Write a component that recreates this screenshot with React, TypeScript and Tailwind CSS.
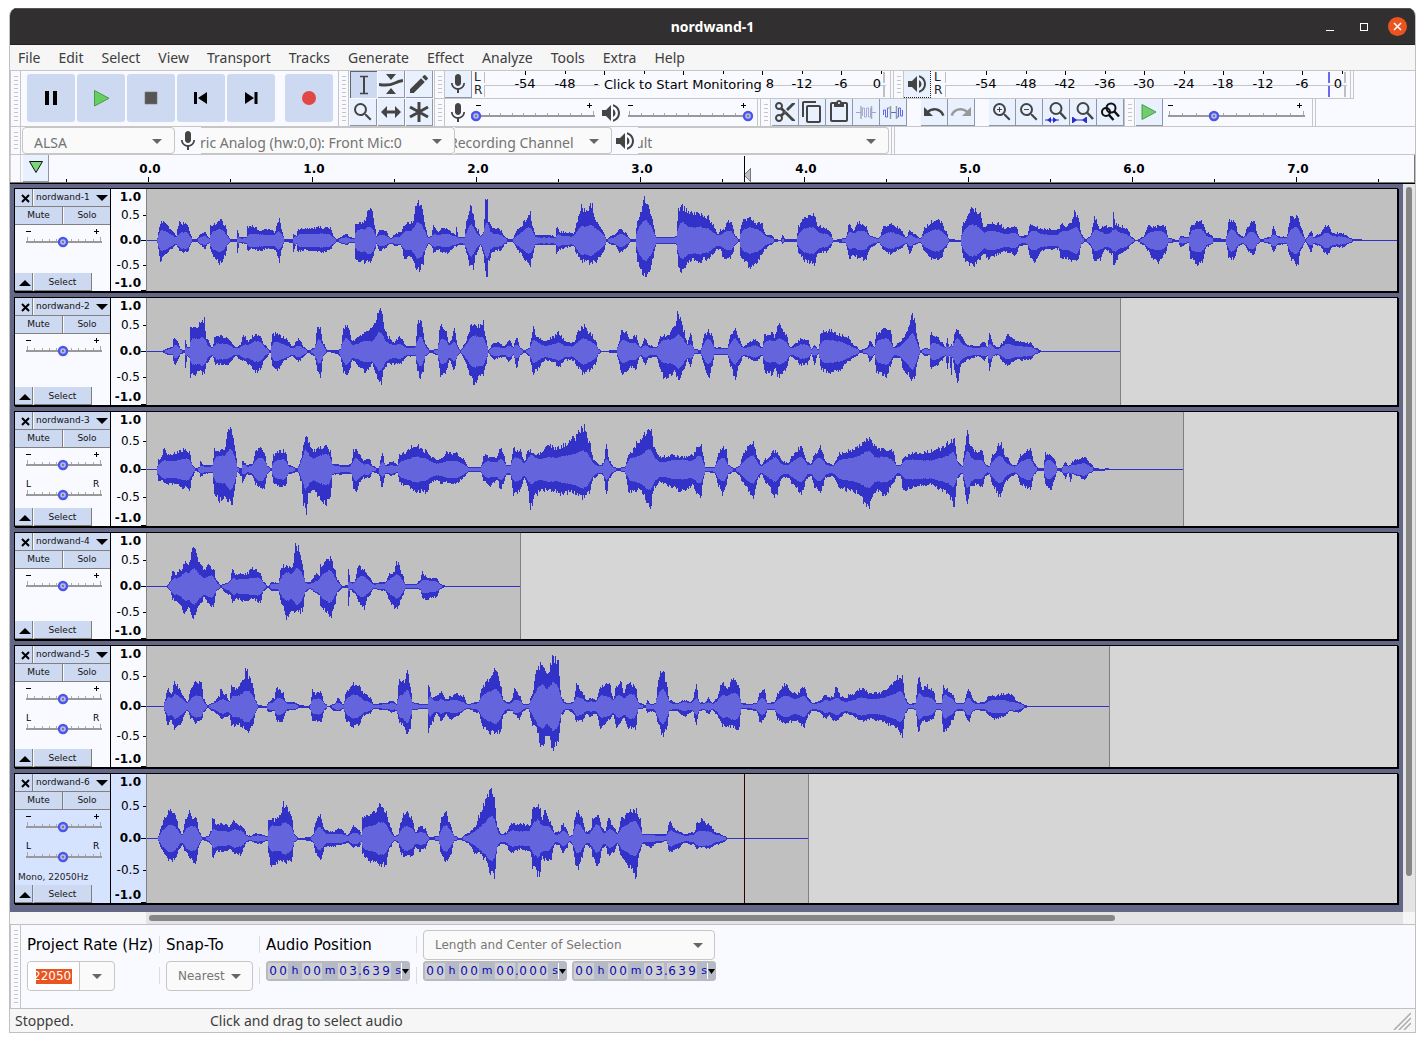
import type { ReactNode } from 'react';
import {
  MdMic,
  MdVolumeUp,
  MdEdit,
  MdSearch,
  MdContentCut,
  MdContentCopy,
  MdContentPaste,
  MdUndo,
  MdRedo,
  MdZoomIn,
  MdZoomOut,
} from 'react-icons/md';

type Track = {
  name: string;
  height: number;
  end: number | null;
  pan: boolean;
  info?: string;
  selected?: boolean;
  cursor?: number;
  wave: string;
};

/* Timeline pixel where the first sample of every clip lies. */
const ORIGIN = 147;

/* Envelope key points: "x:above,below", joined by eased segments. */
const TRACKS: Track[] = [
  {
    name: 'nordwand-1',
    height: 102,
    end: null,
    pan: false,
    wave:
      '156:0,0;157:2,2;159:15,15;160:18,20;165:19,14;170:11,9;176:5,4;178:15,8;179:18,10;187:16,12;190:6,4;192:1,1;196:1,1;200:6,4;205:8,8;207:4,3;209:2,2;210:14,8;213:16,16;220:20,22;225:15,14;227:5,4;230:1,1;236:1,1;237:11,12;239:3,2;246:3,3;247:13,9;253:14,8;260:10,10;267:11,8;275:8,9;276:14,12;279:20,20;281:12,8;284:1,1;292:1,2;293:6,10;296:4,3;297:10,11;305:12,9;313:12,10;325:13,11;330:12,9;333:4,4;336:1,1;346:6,4;350:3,2;354:2,2;355:16,20;365:18,21;368:30,20;371:29,20;375:12,8;376:4,3;379:10,10;385:10,7;390:2,3;395:6,5;400:8,4;405:16,19;410:17,16;413:20,20;415:37,26;419:37,28;423:28,24;425:12,8;428:3,3;431:5,5;433:14,12;438:8,8;442:12,12;447:11,12;452:8,8;455:5,5;456:12,7;458:3,4;464:3,4;466:20,12;470:34,26;473:25,27;475:12,14;478:10,10;480:4,4;483:8,12;485:38,34;487:38,37;488:20,20;492:12,12;496:12,9;500:10,10;505:3,3;508:1,1;512:1,1;517:11,8;520:12,12;525:20,20;530:27,24;532:14,16;535:5,4;550:5,4;555:3,4;556:13,12;560:8,8;568:8,6;573:6,5;576:16,12;581:34,21;585:28,20;591:36,22;596:20,20;600:14,16;603:8,12;606:1,1;612:5,4;615:6,4;619:12,12;625:8,8;630:1,1;635:1,1;637:20,22;640:28,28;644:40,34;648:34,32;652:20,20;656:3,3;674:3,3;676:5,4;678:32,24;681:34,32;690:28,20;696:26,18;698:30,24;703:22,18;707:24,20;712:16,14;718:6,8;720:10,9;723:10,17;728:18,16;731:18,16;735:4,4;739:1,1;740:12,14;742:20,18;750:21,26;756:17,24;761:17,14;765:6,8;770:5,4;775:1,1;780:0,0;782:5,3;785:1,1;796:1,1;798:14,12;805:24,20;814:25,23;818:14,12;826:12,11;830:8,6;833:0,1;845:2,2;849:16,18;853:10,14;858:18,17;865:14,19;870:4,7;878:2,2;884:14,10;891:16,13;899:12,8;906:3,3;909:10,12;914:6,4;920:2,2;924:12,10;932:19,18;940:19,19;945:10,8;949:1,1;960:0,1;963:18,18;970:30,25;974:31,24;979:28,18;983:14,12;988:16,18;998:17,13;1004:12,10;1016:13,14;1019:4,5;1027:5,4;1029:15,16;1034:14,21;1042:11,9;1058:10,8;1061:16,18;1067:14,17;1071:18,19;1074:28,20;1078:24,20;1081:6,3;1085:1,1;1090:4,5;1094:22,19;1100:12,18;1105:14,8;1112:12,14;1113:26,26;1115:16,20;1119:14,14;1127:12,8;1131:3,3;1136:0,0;1143:3,4;1148:15,10;1152:13,18;1158:14,21;1165:14,12;1168:2,2;1178:0,1;1180:4,6;1188:3,2;1190:14,18;1197:19,23;1202:18,20;1206:8,6;1215:2,1;1225:1,1;1229:20,18;1234:20,18;1238:6,5;1243:3,3;1248:14,10;1251:19,13;1254:18,13;1257:6,3;1260:1,1;1270:3,3;1273:14,12;1277:4,4;1286:3,3;1290:22,18;1297:24,25;1301:12,8;1305:1,1;1311:10,11;1313:3,3;1319:6,5;1325:14,12;1328:14,13;1332:7,6;1342:7,6;1350:2,2;1354:1,0;1370:0,0;1397:0,0',
  },
  {
    name: 'nordwand-2',
    height: 107,
    end: 1120,
    pan: false,
    wave:
      '162:0,0;163:1,1;168:3,3;172:4,3;173:12,10;175:13,13;178:8,8;180:2,2;184:1,1;185:10,18;187:4,4;189:4,6;190:24,24;195:22,22;200:28,20;204:31,22;206:12,12;212:4,4;215:16,12;220:15,12;228:13,12;231:8,9;235:4,4;240:6,8;243:16,8;248:10,12;255:17,20;260:16,18;264:6,8;270:1,1;272:16,16;276:17,18;285:13,8;292:5,4;298:12,10;304:4,4;308:1,1;314:3,4;317:22,18;320:22,24;323:8,4;327:1,0;337:1,2;340:2,5;343:24,20;348:24,23;352:10,8;358:14,14;365:18,20;372:22,12;375:30,20;378:40,28;381:42,30;384:24,16;388:14,12;394:9,12;399:14,12;407:5,5;415:5,4;417:27,18;420:31,26;423:20,20;425:6,4;430:1,1;437:2,3;440:26,24;445:20,22;449:8,8;454:22,18;457:6,4;460:1,1;465:8,10;468:18,18;470:25,26;474:25,31;480:26,25;483:30,22;485:14,16;488:1,1;493:8,8;498:8,6;504:5,5;509:12,10;513:4,3;516:15,16;520:3,3;524:1,1;529:3,4;531:14,14;533:24,24;536:14,18;545:10,8;553:14,10;558:18,15;565:10,8;573:8,8;578:20,16;583:25,22;590:18,18;595:12,12;598:2,2;602:0,0;616:1,1;618:8,8;621:20,22;625:20,20;630:12,15;635:16,17;640:4,4;645:13,12;648:6,6;656:4,5;660:14,18;665:16,28;670:18,24;674:24,20;677:38,26;679:36,27;683:22,20;687:8,8;690:18,14;694:2,2;700:1,2;705:18,18;708:20,28;712:16,14;714:4,3;727:3,3;730:16,14;735:22,28;739:12,12;743:4,4;748:8,6;755:12,10;762:4,4;764:16,20;772:18,22;774:14,16;778:26,24;785:18,20;790:4,4;796:8,8;800:12,13;807:12,12;811:2,2;814:6,12;818:2,2;821:20,18;830:20,20;840:16,18;847:14,10;855:5,5;860:1,1;866:3,2;870:10,10;874:4,3;876:18,20;880:20,22;886:24,25;890:20,14;893:4,6;900:10,6;903:14,18;908:24,22;911:38,28;914:32,28;917:12,10;920:1,1;925:3,4;929:2,3;930:18,16;936:14,14;942:8,8;945:4,4;947:12,18;949:4,4;951:6,26;952:6,6;955:20,22;957:22,30;961:14,12;968:6,8;978:5,4;984:10,8;987:4,4;989:18,18;993:6,4;998:4,3;1002:8,10;1007:16,13;1016:10,8;1030:8,8;1035:3,2;1042:0,0;1120:0,0',
  },
  {
    name: 'nordwand-3',
    height: 114,
    end: 1183,
    pan: true,
    wave:
      '156:0,0;157:3,6;158:10,12;161:12,10;164:22,14;168:14,14;175:16,14;183:20,18;189:17,20;192:4,8;195:1,1;199:2,3;200:8,8;203:4,4;212:4,3;214:20,24;219:18,30;225:22,26;228:44,30;232:36,34;235:20,14;237:2,2;241:1,6;242:8,12;247:4,4;252:5,6;255:18,14;260:24,18;264:16,20;267:3,4;271:1,1;273:14,14;280:18,16;285:18,16;288:4,4;297:1,2;301:10,12;303:26,34;306:36,45;308:28,22;313:18,20;318:20,26;325:24,34;330:18,30;332:5,5;347:4,4;351:6,4;353:18,18;356:20,24;359:14,12;364:8,8;369:10,8;372:3,2;378:1,4;382:16,18;385:4,4;392:8,6;397:4,3;399:14,12;403:16,15;415:24,21;425:18,22;432:12,12;437:9,10;441:10,14;447:17,12;455:16,14;463:10,8;468:2,2;480:2,2;484:14,12;490:12,16;497:12,10;500:22,20;503:16,14;506:4,5;510:4,5;513:20,24;520:18,20;524:8,8;527:18,16;530:18,38;535:14,26;540:16,20;548:24,20;556:20,22;560:22,24;572:30,22;583:42,28;589:28,22;593:10,8;600:4,4;603:6,6;606:24,24;609:8,8;614:2,2;616:1,1;624:2,2;629:16,22;640:30,20;650:40,36;654:22,18;660:12,12;672:14,18;683:12,22;692:14,16;700:26,28;703:12,10;705:2,2;714:2,3;718:16,16;722:22,24;726:18,14;728:4,4;734:1,2;739:3,5;742:14,12;748:22,20;753:26,28;758:10,8;761:4,4;765:10,12;775:18,26;782:8,8;788:6,8;792:14,14;801:22,24;807:8,8;810:5,6;815:16,18;820:22,22;826:7,7;832:4,6;840:16,18;848:18,20;855:22,22;868:30,36;876:22,20;884:20,26;893:18,14;896:4,6;900:4,6;903:12,20;911:16,18;920:16,16;930:18,14;940:20,20;948:26,24;954:30,36;957:8,8;962:3,4;964:20,18;967:42,38;970:22,18;976:18,14;982:18,16;985:5,6;989:3,4;992:14,16;1000:26,26;1006:12,10;1012:4,6;1016:4,4;1020:14,14;1030:20,20;1034:6,4;1038:1,1;1043:1,1;1045:16,16;1050:14,20;1054:10,10;1057:1,1;1061:1,2;1065:8,8;1068:3,3;1070:4,12;1072:8,4;1076:10,6;1084:12,10;1090:6,3;1094:1,1;1103:0,1;1106:1,0;1110:0,0;1183:0,0',
  },
  {
    name: 'nordwand-4',
    height: 106,
    end: 520,
    pan: false,
    wave:
      '166:0,0;167:1,1;170:5,4;172:16,12;175:12,14;180:16,18;185:24,28;189:22,20;192:38,34;195:34,26;200:22,18;204:16,10;207:20,16;213:18,20;216:6,4;220:1,1;226:3,6;230:6,8;232:18,16;235:12,12;245:12,14;253:18,12;260:14,16;263:4,4;268:0,1;271:4,4;278:3,4;281:20,16;287:20,32;292:18,22;295:42,26;298:38,26;302:22,24;305:4,6;309:4,2;316:12,6;319:10,8;320:20,18;325:26,24;330:28,32;334:18,20;337:6,6;342:0,1;347:1,1;348:18,20;350:4,3;354:4,6;358:20,14;363:16,22;368:10,10;373:3,2;385:4,4;389:12,14;393:14,20;397:24,22;402:12,10;405:2,2;415:2,2;420:6,3;422:14,12;427:8,12;436:8,10;440:2,2;446:0,0;520:0,0',
  },
  {
    name: 'nordwand-5',
    height: 121,
    end: 1109,
    pan: true,
    wave:
      '163:0,0;164:4,4;167:18,18;171:12,14;174:24,22;180:16,18;184:8,8;187:4,4;191:18,12;196:24,16;201:24,14;203:8,6;207:1,1;212:3,4;219:10,8;220:16,12;225:12,10;229:5,8;231:20,18;237:18,18;243:26,20;246:38,24;249:28,24;253:20,18;255:6,6;258:1,1;266:0,1;268:4,6;274:8,4;276:18,14;282:14,14;286:4,4;293:4,3;300:1,1;308:0,1;310:2,3;312:16,14;315:12,14;321:14,14;324:3,3;328:0,0;334:2,4;338:8,4;343:2,2;346:14,14;352:22,20;358:20,18;364:12,8;370:8,6;373:2,2;385:3,3;392:6,6;396:2,4;399:26,16;403:24,18;407:34,30;410:20,22;412:4,3;422:2,2;427:2,2;428:22,24;432:8,16;436:10,6;441:14,14;446:6,8;450:10,12;456:12,10;463:10,4;467:2,2;478:4,6;482:20,20;490:28,26;495:38,26;500:22,26;503:6,8;508:4,4;511:6,4;515:18,8;519:10,12;523:2,4;528:2,2;532:12,18;536:36,22;541:42,40;547:32,28;553:48,42;558:42,34;561:8,8;566:3,3;573:4,6;576:22,14;582:14,14;586:6,7;590:8,10;596:7,6;600:20,22;609:22,12;613:8,8;616:20,20;620:26,16;623:14,10;628:24,20;635:20,22;638:4,2;645:1,1;647:6,6;650:2,4;655:3,6;658:28,18;662:36,28;666:26,24;669:6,4;676:3,4;684:6,10;690:4,6;692:6,4;696:20,16;699:4,4;704:3,3;708:8,8;712:3,3;716:8,8;722:24,18;727:16,18;732:28,20;738:22,24;741:3,2;749:2,3;756:3,4;760:14,16;764:16,12;767:3,3;774:4,3;777:12,12;785:22,18;792:14,14;796:12,14;804:20,20;808:8,8;812:3,4;819:5,5;825:12,12;829:8,8;833:10,14;836:20,14;840:10,10;845:8,6;850:12,8;862:18,14;870:12,12;880:14,14;890:20,18;896:28,20;902:30,28;905:8,6;909:2,2;915:3,3;918:30,26;922:18,14;926:20,14;933:16,12;936:3,3;941:3,4;943:20,28;947:16,22;952:12,14;956:3,4;963:3,4;968:18,16;973:6,4;978:3,3;984:4,4;988:10,8;993:10,12;1003:12,10;1010:12,4;1018:4,6;1025:1,1;1028:0,0;1109:0,0',
  },
  {
    name: 'nordwand-6',
    height: 129,
    end: 808,
    pan: true,
    info: 'Mono, 22050Hz',
    selected: true,
    cursor: 744,
    wave:
      '157:0,0;158:2,2;160:10,8;162:14,12;164:22,16;170:28,22;175:24,20;179:8,10;182:4,6;185:18,14;189:26,18;193:18,24;196:20,22;199:6,6;202:1,1;208:2,3;211:8,6;212:22,20;216:14,12;224:14,12;230:12,10;233:18,14;240:12,16;244:10,8;246:3,3;251:2,2;254:5,4;260:4,5;267:2,2;268:18,16;271:18,30;275:18,26;280:22,20;282:34,22;286:32,24;291:22,22;294:4,3;298:0,1;310:1,2;313:4,4;315:16,14;320:22,20;325:8,8;332:6,8;340:10,6;347:3,4;353:12,8;359:8,8;361:3,3;362:20,16;370:22,22;376:28,22;379:34,26;385:28,26;390:12,8;394:2,2;398:4,4;400:16,14;405:26,18;412:20,18;415:6,8;420:12,12;424:10,10;429:1,1;438:2,2;441:20,16;445:26,24;450:14,16;454:2,2;460:0,1;467:5,4;475:10,14;478:22,14;485:36,20;490:50,34;494:40,38;497:10,8;501:4,5;506:6,6;510:14,14;520:14,10;526:14,12;530:12,12;532:30,28;539:32,36;542:18,18;544:28,20;550:16,22;554:6,6;559:6,6;562:14,14;566:10,10;569:2,3;572:3,6;575:24,24;578:26,30;582:20,18;585:6,6;590:8,8;593:22,20;598:24,28;602:10,10;605:7,7;608:20,16;613:12,14;617:5,5;621:20,18;630:28,28;635:28,38;640:20,12;642:4,5;650:4,8;658:4,4;666:4,2;669:18,14;673:10,12;678:7,9;684:4,4;694:6,6;697:16,10;700:18,8;708:14,10;716:6,6;724:2,3;727:0,0;808:0,0',
  },
];

function noise(n: number) {
  const v = Math.sin(n * 127.1 + 311.7) * 43758.5453;
  return v - Math.floor(v);
}

function columnPaths(wave: string, mid: number) {
  const keys = wave.split(';').map((item) => {
    const [x, levels] = item.split(':');
    const [up, down] = levels.split(',').map(Number);
    return { x: Number(x), up, down };
  });
  const cols: { x: number; up: number; down: number }[] = [];
  for (let i = 0; i < keys.length - 1; i++) {
    const a = keys[i];
    const b = keys[i + 1];
    for (let x = a.x; x < b.x; x++) {
      const s = (x - a.x) / (b.x - a.x);
      const t = s * s * (3 - 2 * s);
      cols.push({ x, up: a.up + (b.up - a.up) * t, down: a.down + (b.down - a.down) * t });
    }
  }
  let peak = `M0 ${mid}H${keys[0].x - ORIGIN}v1H0z`;
  let rms = '';
  cols.forEach((c, i) => {
    const up = Math.round(c.up * (0.88 + 0.22 * noise(c.x)));
    const down = Math.round(c.down * (0.88 + 0.22 * noise(c.x + 5000)));
    const x = c.x - ORIGIN;
    peak += `M${x} ${mid - up}h1V${mid + down + 1}h-1z`;
    let sum = 0;
    let count = 0;
    for (let k = Math.max(0, i - 2); k <= Math.min(cols.length - 1, i + 2); k++) {
      sum += cols[k].up + cols[k].down;
      count += 2;
    }
    const level = (sum / count) * (0.52 + 0.05 * noise(c.x + 900));
    const inUp = Math.round(Math.min(level, up - 1));
    const inDown = Math.round(Math.min(level, down - 1));
    if (inUp > 0 && inDown > 0) rms += `M${x} ${mid - inUp}h1V${mid + inDown + 1}h-1z`;
  });
  return { peak, rms };
}

function Grip() {
  return (
    <div className="flex w-[11px] shrink-0 justify-center self-stretch border-x border-[#c6c6c6] bg-[#f8faff] py-[5px]">
      <div className="w-1 bg-[repeating-linear-gradient(to_bottom,#c6c6c6_0_1px,transparent_1px_4px)]" />
    </div>
  );
}

function Slider({
  label,
  width,
  height,
  from,
  to,
  value,
  baseline,
  ends,
  steps,
}: {
  label: string;
  width: number;
  height: number;
  from: number;
  to: number;
  value: number;
  baseline: number;
  ends: [string, string];
  steps: number;
}) {
  const ticks = Array.from({ length: steps + 1 }, (_, i) => Math.round(from + 1 + ((to - from - 3) * i) / steps));
  const letters = ends[0] === 'L';
  return (
    <span className="relative block shrink-0">
      <svg width={width} height={height} className="block" shapeRendering="crispEdges">
        <rect x={from} y={baseline} width={to - from} height="2" fill="#999" />
        {ticks.map((x, i) => {
          const end = i === 0 || i === steps;
          return <rect key={i} x={x} y={baseline - (end ? 4 : 2)} width="1" height={end ? 4 : 2} fill="#aaa" />;
        })}
        {letters ? (
          <g className="font-['DejaVu_Sans'] text-[9px]">
            <text x={from} y={baseline - 7}>L</text>
            <text x={to - 9} y={baseline - 7}>R</text>
          </g>
        ) : (
          <path
            d={`M${from} ${baseline - 10}h5v1h-5zM${to - 8} ${baseline - 10}h5v1h-5zM${to - 6} ${baseline - 12}h1v5h-1z`}
            fill="#000"
          />
        )}
        <circle cx={value} cy={baseline + 1} r="4" fill="#b9bdf0" stroke="#4a56e8" strokeWidth="2.4" shapeRendering="auto" />
        <circle cx={value} cy={baseline + 1} r="1.2" fill="#777a90" shapeRendering="auto" />
      </svg>
      <input type="range" aria-label={label} className="absolute inset-0 h-full w-full opacity-0" />
    </span>
  );
}

function ToolButton({ label, children, active = false }: { label: string; children: ReactNode; active?: boolean }) {
  return (
    <button
      aria-label={label}
      className={
        active
          ? 'flex h-[27px] w-[27px] shrink-0 items-center justify-center border-t border-l border-[#5f6577] bg-[#cdd9f0] text-[#444]'
          : 'flex h-[27px] w-[27px] shrink-0 items-center justify-center border-r border-b border-[#8f96a8] bg-[#eaf1fe] text-[#444]'
      }
    >
      {children}
    </button>
  );
}

function TransportButton({ label, children }: { label: string; children: ReactNode }) {
  return (
    <button aria-label={label} className="flex h-12 w-12 items-center justify-center rounded-[3px] bg-[#cdd9f0]">
      <svg width="24" height="24" viewBox="0 0 24 24">
        {children}
      </svg>
    </button>
  );
}

/* The hint covers the middle of the scale: only the parts beside it are lettered. */
const FULL_SCALE = ['-54', '-48', '-42', '-36', '-30', '-24', '-18', '-12', '-6', '0'];
const COVERED_SCALE = ['-54', '-48', '-', '', '', '', '8', '-12', '-6', '0'];

function Meter({ peak, hint }: { peak?: boolean; hint?: string }) {
  const labels = hint ? COVERED_SCALE : FULL_SCALE;
  return (
    <div className="flex">
      <div
        className={
          hint
            ? "w-3 pl-0.5 font-['DejaVu_Sans'] text-xs leading-[13px] text-[#222]"
            : "w-[14px] pl-[3px] font-['DejaVu_Sans'] text-xs leading-[13px] text-[#222]"
        }
      >
        <div>L</div>
        <div>R</div>
      </div>
      <div className="relative">
        <svg width="402" height="27" className="block font-['DejaVu_Sans'] text-[13px]" shapeRendering="crispEdges">
          <path d="M0 1V12M0 15V26M400 1V12M400 15V26" stroke="#c0c0c0" strokeWidth="2" />
          <rect x="0" y="14" width="402" height="1" fill="#c6c6c6" />
          {labels.map((text, i) => {
            const x = Math.round(41 + 39.5 * i);
            const at = text === '-' ? x - 8 : text === '8' ? x + 8 : x;
            return (
              <g key={i}>
                <rect x={x} y="0" width="1" height={i % 2 ? 3 : 4} />
                {text && (
                  <text x={at} y="17" textAnchor={i === 9 ? 'end' : 'middle'}>
                    {text}
                  </text>
                )}
              </g>
            );
          })}
          {peak && <path d="M384 1V12M384 15V26" stroke="#6a6aee" strokeWidth="2" />}
        </svg>
        {hint && (
          <button className="absolute top-1 left-4 ml-[100px] h-[19px] bg-[#f8faff] px-1 font-['DejaVu_Sans'] text-[13px] leading-[19px] whitespace-nowrap">
            {hint}
          </button>
        )}
      </div>
    </div>
  );
}

function Arrow({ className = '' }: { className?: string }) {
  return (
    <svg width="10" height="5" className={className} aria-hidden="true">
      <path d="M0 0h10l-5 5z" fill="#666" />
    </svg>
  );
}

function DeviceSelect({ label, text, className, inner }: { label: string; text: string; className: string; inner: string }) {
  return (
    <div className={`relative h-[27px] shrink-0 overflow-hidden border border-[#c6c6c6] bg-[#fafafa] ${className}`}>
      <select
        aria-label={label}
        className={`h-full w-full appearance-none bg-transparent pt-[3px] font-['Noto_Sans'] text-[14px] text-[#737373] ${inner}`}
      >
        <option>{text}</option>
      </select>
      <Arrow className="pointer-events-none absolute top-[11px] right-3" />
    </div>
  );
}

function Magnifier({ children }: { children?: ReactNode }) {
  return (
    <svg width="24" height="24" viewBox="0 0 24 24" fill="none">
      <circle cx="12" cy="8.500" r="5.500" stroke="#444" strokeWidth="2" />
      <path d="M16 12.500l6 6.500" stroke="#444" strokeWidth="2.500" />
      {children}
    </svg>
  );
}

function TransportBar() {
  return (
    <div className="flex">
      <Grip />
      <div className="flex items-start gap-0.5 pt-[3px] pr-[5px] pl-1.5">
        <TransportButton label="Pause">
          <path d="M6 5h4v14H6zM14 5h4v14h-4z" />
        </TransportButton>
        <TransportButton label="Play">
          <path d="M5.500 4.500v15.500l14.500-7.700z" fill="#65d060" stroke="#4c9a48" />
        </TransportButton>
        <TransportButton label="Stop">
          <path d="M6 6h12v12H6z" fill="#555" stroke="#777" strokeWidth="0.600" />
        </TransportButton>
        <TransportButton label="Skip to Start">
          <path d="M5 6h3v12H5zM18 6v12l-9-6z" />
        </TransportButton>
        <TransportButton label="Skip to End">
          <path d="M15.500 6h3v12h-3zM6 6v12l9-6z" />
        </TransportButton>
        <div className="ml-2">
          <TransportButton label="Record">
            <circle cx="12" cy="12" r="7" fill="#e04747" />
          </TransportButton>
        </div>
      </div>
    </div>
  );
}

function ToolsBar() {
  return (
    <div className="flex pr-px">
      <Grip />
      <div className="ml-px grid grid-cols-3 gap-px">
        <ToolButton label="Selection Tool" active>
          <svg width="24" height="24" fill="none" stroke="#444">
            <path d="M8 3.500h3.500l.5 1 .5-1H16M8 20.500h3.500l.5-1 .5 1H16" strokeWidth="1.500" />
            <path d="M12 4v16" strokeWidth="2" />
          </svg>
        </ToolButton>
        <ToolButton label="Envelope Tool">
          <svg width="24" height="24" fill="#444">
            <path d="M7 2h10l-5 6zM7 22h10l-5-6z" />
            <path d="M0 12.500c8 1.500 12 .5 16-1.500 3-1.500 5-2 8-2.500" fill="none" stroke="#444" strokeWidth="3" />
          </svg>
        </ToolButton>
        <ToolButton label="Draw Tool">
          <MdEdit size={24} />
        </ToolButton>
        <ToolButton label="Zoom Tool">
          <MdSearch size={24} />
        </ToolButton>
        <ToolButton label="Time Shift Tool">
          <svg width="24" height="24" fill="#444">
            <path d="M2 12l6-6v4.500h8V6l6 6-6 6v-4.500H8V18z" />
          </svg>
        </ToolButton>
        <ToolButton label="Multi-Tool">
          <svg width="24" height="24" stroke="#444" strokeWidth="3">
            <path d="M12 2v20M3 7l18 10M3 17L21 7" />
          </svg>
        </ToolButton>
      </div>
    </div>
  );
}

function MeterBars() {
  return (
    <div className="flex h-7 border-b border-[#c6c6c6]">
      <div className="flex border-r border-[#c6c6c6] pr-1">
        <Grip />
        <ToolButton label="Record Meter">
          <MdMic size={24} />
        </ToolButton>
        <Meter hint="Click to Start Monitoring" />
      </div>
      <div className="ml-0.5 flex border-r border-[#c6c6c6] pr-[3px]">
        <Grip />
        <button
          aria-label="Playback Meter"
          className="flex h-[27px] w-[27px] items-center justify-center border-r border-b border-dotted border-[#222] bg-[#eaf1fe] text-[#444]"
        >
          <MdVolumeUp size={24} />
        </button>
        <Meter peak />
      </div>
      <div className="ml-0.5 border-l border-[#c6c6c6]" />
    </div>
  );
}

function EditBars() {
  return (
    <div className="flex h-[27px]">
      <div className="flex border-r border-[#c6c6c6]">
        <Grip />
        <span className="flex w-[26px] items-center justify-center text-[#444]">
          <MdMic size={24} />
        </span>
        <Slider label="Recording Volume" width={126} height={27} from={5} to={124} value={5} baseline={16} ends={['-', '+']} steps={10} />
        <span className="flex w-7 items-center justify-center text-[#444]">
          <MdVolumeUp size={24} />
        </span>
        <Slider label="Playback Volume" width={132} height={27} from={3} to={124} value={123} baseline={16} ends={['-', '+']} steps={10} />
      </div>
      <div className="ml-0.5 flex">
        <Grip />
        <div className="ml-px flex">
          <ToolButton label="Cut">
            <MdContentCut size={24} />
          </ToolButton>
          <ToolButton label="Copy">
            <MdContentCopy size={24} />
          </ToolButton>
          <ToolButton label="Paste">
            <MdContentPaste size={24} />
          </ToolButton>
          <ToolButton label="Trim Audio">
            <svg width="24" height="24" fill="none">
              <path d="M2 12.500h5M17 12.500h5" stroke="#9aa3d8" />
              <path d="M8.500 16V8h2v9h2V8h2v9h2V8" stroke="#a4aae4" />
              <path d="M7 6v13M17.500 6v13" stroke="#aaa" strokeWidth="1.500" />
            </svg>
          </ToolButton>
          <ToolButton label="Silence Audio">
            <svg width="24" height="24" fill="none">
              <path d="M2.500 15v-5h2v7h2V8h2M16 17h1.500V8h2v8h2v-6" stroke="#5d68e6" />
              <path d="M10 12.500h5" stroke="#5560e0" />
              <path d="M9.500 6v13M15.500 6v13" stroke="#999" strokeWidth="1.500" />
            </svg>
          </ToolButton>
        </div>
        <div className="ml-[14px] flex">
          <ToolButton label="Undo">
            <MdUndo size={24} />
          </ToolButton>
          <ToolButton label="Redo">
            <MdRedo size={24} color="#999" />
          </ToolButton>
        </div>
        <div className="ml-[14px] flex">
          <ToolButton label="Zoom In">
            <MdZoomIn size={24} />
          </ToolButton>
          <ToolButton label="Zoom Out">
            <MdZoomOut size={24} />
          </ToolButton>
          <ToolButton label="Zoom to Selection">
            <Magnifier>
              <path d="M1 20h14" stroke="#2c2cc8" />
              <path d="M3 20l4-3v6zM13 20l-4-3v6z" fill="#2c2cc8" />
            </Magnifier>
          </ToolButton>
          <ToolButton label="Fit Project">
            <Magnifier>
              <path d="M2 20h13M1.500 17v6M15.500 17v6" stroke="#2c2cc8" />
              <path d="M2 17l4 3-4 3zM15 17l-4 3 4 3z" fill="#2c2cc8" />
            </Magnifier>
          </ToolButton>
          <ToolButton label="Zoom Toggle">
            <svg width="24" height="24" fill="none" stroke="#111" strokeWidth="2">
              <circle cx="13" cy="8" r="4.500" />
              <circle cx="8" cy="12" r="4" />
              <path d="M16 11l5 5.500M11 15l4.500 5" strokeWidth="2.500" />
            </svg>
          </ToolButton>
        </div>
      </div>
      <div className="flex border-r border-[#c6c6c6]">
        <Grip />
        <div className="ml-px flex">
          <ToolButton label="Play-at-Speed">
            <svg width="24" height="24">
              <path d="M5 4.500v15l14-7.500z" fill="#6fce6c" stroke="#4c9a48" />
            </svg>
          </ToolButton>
          <Slider label="Playback Speed" width={149} height={27} from={5} to={142} value={51} baseline={16} ends={['-', '+']} steps={10} />
        </div>
      </div>
      <div className="ml-0.5 border-l border-[#c6c6c6]" />
    </div>
  );
}

function DeviceBar() {
  return (
    <div className="flex border-b border-[#c6c6c6]">
      <Grip />
      <DeviceSelect label="Audio Host" text="ALSA" className="ml-px w-[153px] rounded" inner="pl-[11px]" />
      <span className="flex w-[26px] items-center justify-center text-[#444]">
        <MdMic size={24} />
      </span>
      <DeviceSelect
        label="Recording Device"
        text="ric Analog (hw:0,0): Front Mic:0"
        className="w-[254px] rounded-r border-l-0"
        inner="-indent-px"
      />
      <DeviceSelect
        label="Recording Channels"
        text="Recording Channel"
        className="w-[157px] rounded-r border-l-0"
        inner="-indent-[6px]"
      />
      <span className="flex w-[26px] items-center justify-center text-[#444]">
        <MdVolumeUp size={24} />
      </span>
      <DeviceSelect label="Playback Device" text="ult" className="w-[251px] rounded-r border-l-0" inner="-indent-[3px]" />
      <div className="ml-0.5 w-1 border-x border-[#c6c6c6]" />
    </div>
  );
}

function TimeRuler() {
  const ticks = Array.from({ length: 17 }, (_, i) => i - 1);
  return (
    <div className="flex h-[29px] border-b border-black">
      <div className="flex min-w-0 flex-1 border-r border-b border-[#777]">
        <div className="w-[11px] border-x border-[#d0d0d0]" />
        <button
          aria-label="Pinned Play Head"
          className="ml-0.5 flex w-[26px] items-center justify-center border-r border-b border-[#8f96a8] bg-[#eaf1fe]"
        >
          <svg width="18" height="16">
            <path d="M2.500 1.500h13L9 12.500z" fill="#7bd878" stroke="#111" />
          </svg>
        </button>
        <svg className="block h-[27px] min-w-0 flex-1 font-['DejaVu_Sans'] text-xs font-bold" shapeRendering="crispEdges">
          {ticks.map((i) => {
            const x = 99 + 82 * i;
            return i % 2 === 0 ? (
              <g key={i}>
                <rect x={x} y="22" width="1" height="5" />
                <text x={x + 2} y="18" textAnchor="middle">
                  {(i / 2).toFixed(1)}
                </text>
              </g>
            ) : (
              <rect key={i} x={x} y="24" width="1" height="3" />
            );
          })}
          <path d="M695 20l6-6v12z" fill="#c0c0c0" stroke="#777" />
          <rect x="695" y="1" width="1" height="26" />
        </svg>
      </div>
    </div>
  );
}

const panelButton = "flex items-center bg-[#cdd9f0] pt-px font-['DejaVu_Sans'] text-[9px] text-[#111]";

function TrackPanel({ track }: { track: Track }) {
  return (
    <div
      className={
        track.selected
          ? 'flex w-24 shrink-0 flex-col border-r border-black bg-[#d6e3ff]'
          : 'flex w-24 shrink-0 flex-col border-r border-black bg-[#f8faff]'
      }
    >
      <div className="flex h-[18px] border-b border-[#808080]">
        <button
          aria-label={`Close ${track.name}`}
          className={`${panelButton} w-[18px] justify-center border-r border-[#808080]`}
        >
          <svg width="9" height="9" className="ml-1">
            <path d="M1 1l7 7M8 1L1 8" stroke="#000" strokeWidth="2" />
          </svg>
        </button>
        <button className={`${panelButton} ml-px flex-1 justify-between pr-0.5 pl-0.5`}>
          {track.name}
          <svg width="12" height="6">
            <path d="M0 0h12L6 6z" />
          </svg>
        </button>
      </div>
      <div className="flex h-[18px] border-b border-[#808080]">
        <button className={`${panelButton} w-12 justify-center border-r border-[#808080]`}>Mute</button>
        <button className={`${panelButton} ml-px flex-1 justify-center`}>Solo</button>
      </div>
      <Slider label={`${track.name} gain`} width={95} height={30} from={11} to={87} value={48} baseline={16} ends={['-', '+']} steps={10} />
      {track.pan && (
        <Slider label={`${track.name} pan`} width={95} height={30} from={11} to={87} value={48} baseline={16} ends={['L', 'R']} steps={10} />
      )}
      {track.info && <div className="pl-[3px] font-['DejaVu_Sans'] text-[9px] leading-[14px] text-[#222]">{track.info}</div>}
      <div className="mt-auto flex h-[18px]">
        <button
          aria-label={`Collapse ${track.name}`}
          className={`${panelButton} w-[18px] justify-center border-r border-b border-[#808080]`}
        >
          <svg width="12" height="6" className="mt-0.5 ml-0.5 shrink-0">
            <path d="M0 6h12L6 0z" />
          </svg>
        </button>
        <button className={`${panelButton} ml-px w-[58px] justify-center border-r border-b border-[#808080]`}>
          <span className="pt-px">Select</span>
        </button>
      </div>
    </div>
  );
}

function LevelRuler({ height, selected }: { height: number; selected?: boolean }) {
  const mid = Math.floor(height / 2);
  const quarter = Math.floor(height / 4);
  return (
    <svg
      width="36"
      height={height}
      shapeRendering="crispEdges"
      className={
        selected
          ? "block shrink-0 border-r border-[#808080] bg-[#d6e3ff] font-['DejaVu_Sans'] text-xs"
          : "block shrink-0 border-r border-[#808080] bg-[#f8faff] font-['DejaVu_Sans'] text-xs"
      }
    >
      <g textAnchor="end" className="font-bold">
        <text x="30" y="12">1.0</text>
        <text x="30" y={mid + 4}>0.0</text>
        <text x="30" y={height - 4}>-1.0</text>
      </g>
      <g textAnchor="end">
        <text x="29" y={mid - quarter + 4}>0.5</text>
        <text x="29" y={mid + quarter + 4}>-0.5</text>
      </g>
      <path d={`M30 ${mid}h6v1h-6zM32 ${mid - quarter}h4v1h-4zM32 ${mid + quarter}h4v1h-4zM30 ${height - 1}h6v1h-6z`} />
    </svg>
  );
}

function TrackRow({ track }: { track: Track }) {
  const mid = Math.floor(track.height / 2);
  const { peak, rms } = columnPaths(track.wave, mid);
  const width = (track.end ?? 1397) - ORIGIN;
  return (
    <div className="flex border border-black bg-[#d6d6d6] shadow-[1px_1px_0_#000]">
      <TrackPanel track={track} />
      <LevelRuler height={track.height} selected={track.selected} />
      <div
        className={
          track.end === null
            ? 'relative min-w-0 flex-1 overflow-hidden bg-[#c0c0c0]'
            : 'relative shrink-0 border-r border-[#808080] bg-[#c0c0c0]'
        }
      >
        <svg width={width} height={track.height} className="block" shapeRendering="crispEdges">
          <path d={peak} fill="#3232c8" />
          <path d={rms} fill="#6464dc" />
          {track.cursor && <rect x={track.cursor - ORIGIN} y="0" width="1" height={track.height} fill="#300" />}
        </svg>
      </div>
    </div>
  );
}

function TimeField({ label, value }: { label: string; value: string[] }) {
  const digits = (text: string) =>
    text.split('').map((c, i) => (
      <span key={i} className="w-[10px] bg-[#d0d0d0] text-center text-xs leading-4">
        {c}
      </span>
    ));
  return (
    <div
      role="group"
      aria-label={label}
      className="flex h-5 w-36 items-center rounded-[3px] border border-[#b9b9b9] bg-[#b6bac6] pl-px font-['DejaVu_Sans'] text-[11px] text-[#0a0ab4]"
    >
      {digits(value[0])}
      <span className="w-[14px] text-center">h</span>
      {digits(value[1])}
      <span className="w-4 text-center">m</span>
      {digits(value[2])}
      <span className="w-[3px] text-xs">.</span>
      {digits(value[3])}
      <span className="w-[10px] text-right">s</span>
      <button aria-label={`${label} format`} className="flex h-4 w-2 items-center justify-center border-l border-white">
        <svg width="7" height="5" className="shrink-0">
          <path d="M0 0h7L3.500 5z" />
        </svg>
      </button>
    </div>
  );
}

function Separator() {
  return (
    <div className="mx-1.5 flex w-px flex-col gap-[14px] pt-1.5">
      <div className="h-[17px] bg-[#dcdcdc]" />
      <div className="h-[17px] bg-[#dcdcdc]" />
    </div>
  );
}

const fieldLabel = "flex h-[30px] items-center font-['DejaVu_Sans'] text-[15px] text-black";

function SelectionBar() {
  return (
    <div className="flex h-[83px] bg-[#f8faff]">
      <Grip />
      <div className="flex pt-[5px] pl-1.5">
        <div className="flex w-[126px] flex-col gap-px">
          <label htmlFor="rate" className={`${fieldLabel} whitespace-nowrap`}>
            Project Rate (Hz)
          </label>
          <div className="flex h-[30px] w-[88px] rounded border border-[#c6c6c6] bg-[#fafafa]">
            <div className="flex w-[52px] items-center rounded-l border-r border-[#c6c6c6] bg-white pl-2">
              <input
                id="rate"
                defaultValue="22050"
                className="h-[15px] w-9 bg-[#e95420] -indent-[3px] font-['DejaVu_Sans'] text-xs text-white"
              />
            </div>
            <button aria-label="Choose rate" className="flex flex-1 items-center justify-center">
              <Arrow />
            </button>
          </div>
        </div>
        <Separator />
        <div className="flex w-[87px] flex-col gap-px">
          <label htmlFor="snap" className={fieldLabel}>
            Snap-To
          </label>
          <div className="relative h-[30px]">
            <select
              id="snap"
              className="h-full w-full appearance-none rounded border border-[#c6c6c6] bg-[#fafafa] pl-[11px] font-['DejaVu_Sans'] text-xs text-[#777]"
            >
              <option>Nearest</option>
            </select>
            <Arrow className="pointer-events-none absolute top-[13px] right-3" />
          </div>
        </div>
        <Separator />
        <div className="flex w-36 flex-col gap-px">
          <div className={fieldLabel}>Audio Position</div>
          <TimeField label="Audio Position" value={['00', '00', '03', '639']} />
        </div>
        <Separator />
        <div className="flex flex-col gap-px">
          <div className="relative h-[30px] w-[292px]">
            <select
              aria-label="Selection display"
              className="h-full w-full appearance-none rounded border border-[#c6c6c6] bg-[#fafafa] pl-[11px] font-['DejaVu_Sans'] text-xs text-[#777]"
            >
              <option>Length and Center of Selection</option>
            </select>
            <Arrow className="pointer-events-none absolute top-[13px] right-3" />
          </div>
          <div className="flex gap-[5px]">
            <TimeField label="Selection Length" value={['00', '00', '00', '000']} />
            <TimeField label="Selection Center" value={['00', '00', '03', '639']} />
          </div>
        </div>
      </div>
    </div>
  );
}

const MENUS = ['File', 'Edit', 'Select', 'View', 'Transport', 'Tracks', 'Generate', 'Effect', 'Analyze', 'Tools', 'Extra', 'Help'];

export default function App() {
  return (
    <div className="bg-white px-[9px] pt-2 pb-2 font-['Noto_Sans',sans-serif]">
      <div className="overflow-hidden rounded-t-lg border-x border-b border-[#c0c0c0] bg-[#f8faff]">
        <header className="flex h-[37px] items-center border-t border-b border-t-[#555] border-b-[#222] bg-[#322f30] text-white">
          <div className="w-[100px]" />
          <h1 className="flex-1 text-center text-sm font-bold">nordwand-1</h1>
          <div className="flex w-[100px] items-center justify-end pr-2">
            <button aria-label="Minimize" className="h-3 w-2">
              <span className="mt-2 block h-px w-2 bg-white" />
            </button>
            <button aria-label="Maximize" className="ml-[26px] h-2 w-2 border border-white" />
            <button
              aria-label="Close"
              className="ml-5 flex h-[19px] w-[19px] items-center justify-center rounded-full bg-[#e95420]"
            >
              <svg width="9" height="9">
                <path d="M1 1l7 7M8 1L1 8" stroke="#fff" strokeWidth="1.500" />
              </svg>
            </button>
          </div>
        </header>
        <nav className="flex h-[26px] items-center gap-[18px] border-b border-[#c6c6c6] bg-[#f6f6f6] pl-2">
          {MENUS.map((m) => (
            <button key={m} className="text-sm text-[#3d3d3d]">
              {m}
            </button>
          ))}
        </nav>

        <div className="flex h-14 border-b border-[#c6c6c6]">
          <TransportBar />
          <ToolsBar />
          <div>
            <MeterBars />
            <EditBars />
          </div>
        </div>
        <DeviceBar />
        <TimeRuler />

        <div className="flex">
          <main className="flex min-w-0 flex-1 flex-col gap-[5px] bg-[#636785] pt-1 pr-[5px] pb-2 pl-1">
            {TRACKS.map((t) => (
              <TrackRow key={t.name} track={t} />
            ))}
          </main>
          <div className="w-3 bg-[#e4e4e4] pt-[3px]">
            <div className="mx-auto h-[95%] w-1.5 rounded-full bg-[#868686]" />
          </div>
        </div>
        <div className="flex h-[13px] border-b border-[#c0c0c0] bg-[#f6f6f6] pr-3 pl-[136px]">
          <div className="flex flex-1 items-center bg-[#e4e4e4] pl-[3px]">
            <div className="h-1.5 w-[77%] rounded-full bg-[#868686]" />
          </div>
        </div>

        <SelectionBar />
        <footer className="flex h-6 items-center border-t border-[#c0c0c0] bg-[#f6f6f6] pl-[5px] text-sm text-[#3d3d3d]">
          <span className="w-[195px]">Stopped.</span>
          <span>Click and drag to select audio</span>
          <svg width="18" height="18" className="mr-1 ml-auto" stroke="#aaa" strokeWidth="1.500">
            <path d="M1 18L18 1M6 18L18 6M11 18l7-7" />
          </svg>
        </footer>
      </div>
    </div>
  );
}
